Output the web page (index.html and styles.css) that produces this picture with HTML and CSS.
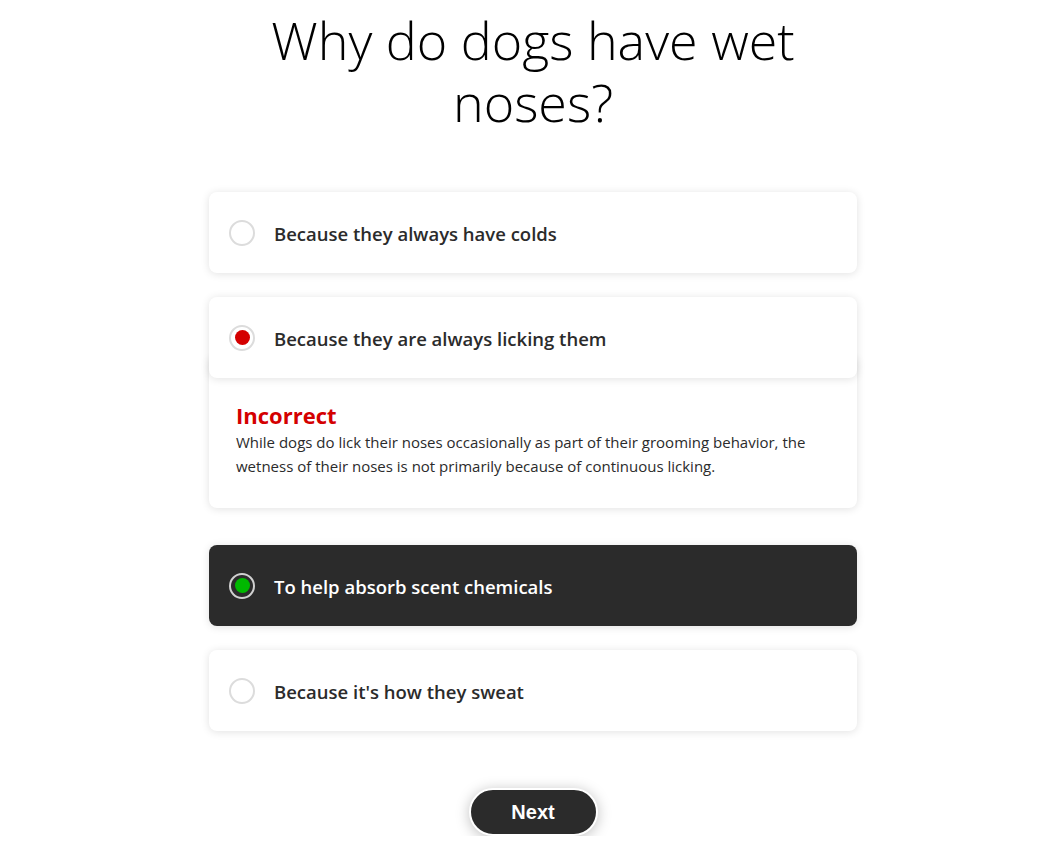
FILE: index.html
```html
<!DOCTYPE html>
<html>
<head>
<meta charset="utf-8">
<link rel="stylesheet" href="styles.css">
</head>
<body>
<main class="page">
  <h1 class="question">Why do dogs have wet noses?</h1>
  <div class="options">
    <div class="option">
      <span class="radio"></span>
      <span class="label">Because they always have colds</span>
    </div>
    <div class="answer-group">
      <div class="option option-front">
        <span class="radio radio-wrong"></span>
        <span class="label">Because they are always licking them</span>
      </div>
      <div class="feedback">
        <div class="feedback-title">Incorrect</div>
        <p class="feedback-text">While dogs do lick their noses occasionally as part of their grooming behavior, the wetness of their noses is not primarily because of continuous licking.</p>
      </div>
    </div>
    <div class="option option-correct">
      <span class="radio radio-right"></span>
      <span class="label">To help absorb scent chemicals</span>
    </div>
    <div class="option">
      <span class="radio"></span>
      <span class="label">Because it's how they sweat</span>
    </div>
  </div>
  <div class="actions">
    <button class="next">Next</button>
  </div>
</main>
</body>
</html>
```
FILE: styles.css
```css
* { box-sizing: border-box; }
html, body { margin: 0; padding: 0; background: #fff; }
body { font-family: "Open Sans", "Noto Sans", sans-serif; color: #2b2b2b; }
.page {
  width: 1050px;
  padding: 0 0 0 16px;
  display: flex;
  flex-direction: column;
  align-items: center;
}
.question {
  width: 600px;
  margin: 9px 0 0;
  font-weight: 300;
  font-size: 52px;
  line-height: 62px;
  text-align: center;
  color: #000;
}
.options {
  width: 648px;
  margin-top: 59px;
  display: flex;
  flex-direction: column;
  gap: 24px;
}
.option {
  height: 81px;
  background: #fff;
  border-radius: 8px;
  box-shadow: 0 1px 8px rgba(0,0,0,0.12);
  display: flex;
  align-items: center;
  padding-left: 20px;
  gap: 19px;
}
.option-front { position: relative; z-index: 1; }
.label {
  font-size: 18.5px;
  font-weight: 600;
  color: #2b2b2b;
  padding-top: 1px;
}
.radio {
  width: 26px;
  height: 26px;
  border-radius: 50%;
  border: 2px solid #dcdcdc;
  background: #fff;
  display: flex;
  align-items: center;
  justify-content: center;
  flex: none;
}
.radio-wrong::after, .radio-right::after {
  content: "";
  width: 15px;
  height: 15px;
  border-radius: 50%;
}
.radio-wrong::after { background: #d40000; }
.radio-right { background: #2b2b2b; border-color: #d0d0d0; }
.radio-right::after { background: #00b900; }
.option-correct { background: #2b2b2b; }
.option-correct .label { color: #fff; }
.answer-group { display: flex; flex-direction: column; margin-bottom: 13px; }
.feedback {
  margin-top: -20px;
  background: #fff;
  border-radius: 0 0 8px 8px;
  box-shadow: 0 1px 8px rgba(0,0,0,0.12);
  padding: 42px 27px 30px;
}
.feedback-title {
  color: #d40000;
  font-weight: 700;
  font-size: 22px;
  line-height: 30px;
}
.feedback-text {
  margin: 0;
  font-size: 15px;
  line-height: 24px;
  color: #2b2b2b;
}
.actions { margin-top: 57px; }
.next {
  width: 129px;
  height: 48px;
  border-radius: 24px;
  border: 2px solid #fff;
  background: #2b2b2b;
  color: #fff;
  font-family: "Liberation Sans", Arial, sans-serif;
  font-weight: 700;
  font-size: 20px;
  box-shadow: 0 2px 14px rgba(0,0,0,0.25);
}
```
